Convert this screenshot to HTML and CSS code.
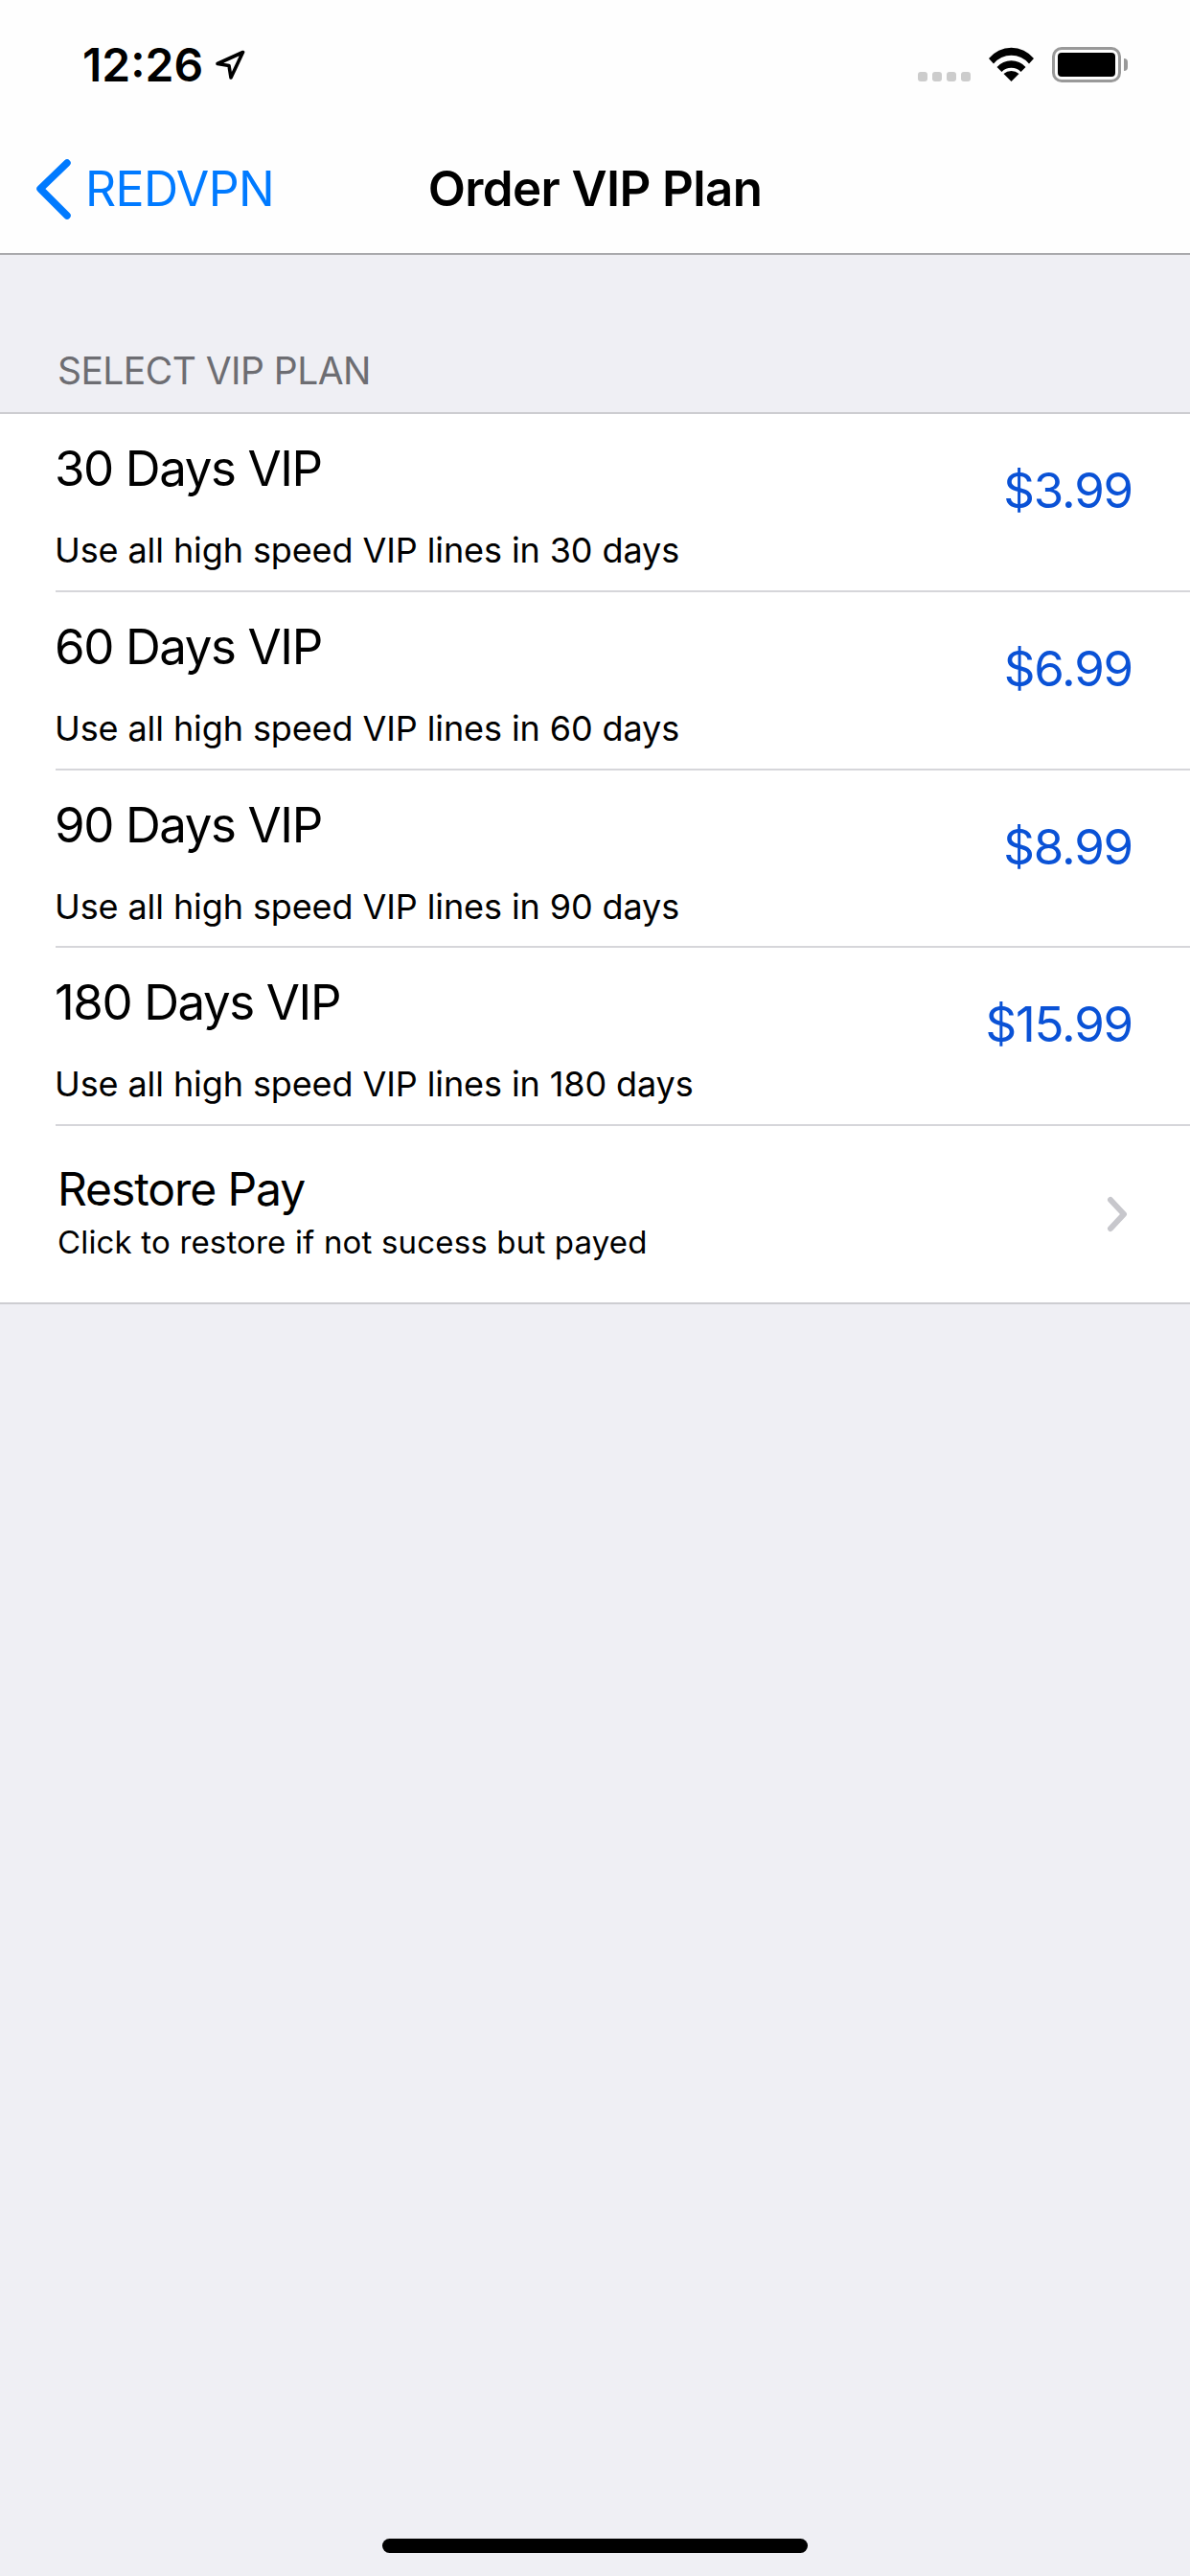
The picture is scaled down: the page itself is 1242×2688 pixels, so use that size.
FILE: index.html
```html
<!DOCTYPE html>
<html lang="en">
<head>
<meta charset="utf-8">
<title>Order VIP Plan</title>
<link rel="stylesheet" href="styles.css">
</head>
<body>
<div class="screen">
  <header class="topbar">
    <div class="status">
      <div class="status-left">
        <span class="time">12:26</span>
        <svg class="loc" viewBox="0 0 32 32" width="32" height="32"><path d="M29.5 2.5 L3 14.5 L15 16.5 L17 29 Z" fill="none" stroke="#000" stroke-width="3.6" stroke-linejoin="round"/></svg>
      </div>
      <div class="status-right">
        <div class="dots"><i></i><i></i><i></i><i></i></div>
        <svg class="wifi" viewBox="0 0 47 36" width="47" height="36"><path d="M0 12A30 30 0 0 1 47 12L42 17.500A24 24 0 0 0 5 17.500Z"/><path d="M8.500 21A20 20 0 0 1 38.500 21L33.500 26A14 14 0 0 0 13.500 26Z"/><path d="M15.500 28A12 12 0 0 1 31.500 28L23.500 36Z"/></svg>
        <div class="battery"><div class="battery-body"><div class="battery-fill"></div></div><div class="battery-cap"></div></div>
      </div>
    </div>
    <nav class="nav">
      <div class="back">
        <svg class="back-chevron" viewBox="0 0 38 64" width="38" height="64"><path d="M33 5 L5 32 L33 60" fill="none" stroke="#007aff" stroke-width="7.500" stroke-linecap="round" stroke-linejoin="round"/></svg>
        <span class="back-label">REDVPN</span>
      </div>
      <h1 class="nav-title">Order VIP Plan</h1>
      <div class="nav-spacer"></div>
    </nav>
  </header>

  <h2 class="section-title">SELECT VIP PLAN</h2>

  <section class="group">
    <div class="row">
      <div class="plan"><div class="plan-name">30 Days VIP</div><div class="plan-desc">Use all high speed VIP lines in 30 days</div></div>
      <div class="price">$3.99</div>
    </div>
    <div class="row">
      <div class="plan"><div class="plan-name">60 Days VIP</div><div class="plan-desc">Use all high speed VIP lines in 60 days</div></div>
      <div class="price">$6.99</div>
    </div>
    <div class="row">
      <div class="plan"><div class="plan-name">90 Days VIP</div><div class="plan-desc">Use all high speed VIP lines in 90 days</div></div>
      <div class="price">$8.99</div>
    </div>
    <div class="row">
      <div class="plan"><div class="plan-name">180 Days VIP</div><div class="plan-desc">Use all high speed VIP lines in 180 days</div></div>
      <div class="price">$15.99</div>
    </div>
    <div class="row row-restore">
      <div class="plan"><div class="restore-name">Restore Pay</div><div class="restore-desc">Click to restore if not sucess but payed</div></div>
      <svg class="disclosure" viewBox="0 0 22 38" width="22" height="38"><path d="M4 4 L18 19 L4 34" fill="none" stroke="#c7c7cc" stroke-width="6" stroke-linecap="round" stroke-linejoin="round"/></svg>
    </div>
  </section>

  <div class="home-indicator"></div>
</div>
</body>
</html>
```

FILE: styles.css
```css
* { box-sizing: border-box; }
html, body { margin: 0; padding: 0; }
body { background: #efeff4; font-family: Inter, "Liberation Sans", sans-serif; color: #000; }
.screen { position: relative; width: 1242px; height: 2688px; overflow: hidden; background: #efeff4; }

.topbar { background: #fefefe; border-bottom: 2px solid #a9a9ac; height: 266px; }

.status { height: 132px; display: flex; justify-content: space-between; padding: 39px 65px 0 86px; }
.status-left { display: flex; align-items: flex-start; gap: 12px; }
.time { font-size: 48px; line-height: 58px; font-weight: 600; }
.loc { margin-top: 13px; }
.status-right { display: flex; align-items: flex-start; padding-top: 10px; }
.dots { display: flex; gap: 5px; margin-top: 26px; margin-right: 19px; }
.dots i { width: 10px; height: 10px; border-radius: 3px; background: #cccccc; }
.wifi { margin-right: 19px; }
.battery { display: flex; align-items: center; gap: 3px; }
.battery-body { width: 72px; height: 37px; border: 3px solid #999999; border-radius: 10px; padding: 3px; }
.battery-fill { width: 100%; height: 100%; background: #000; border-radius: 4px; }
.battery-cap { width: 4px; height: 13px; background: #999999; border-radius: 0 4px 4px 0; }

.nav { height: 132px; display: grid; grid-template-columns: 1fr auto 1fr; align-items: start; }
.back { display: flex; align-items: flex-start; padding-left: 37px; }
.back-chevron { margin-top: 33px; }
.back-label { font-size: 50px; line-height: 60px; color: #007aff; margin-left: 14px; margin-top: 35px; letter-spacing: -0.6px; }
.nav-title { margin: 35px 0 0; font-size: 51px; line-height: 60px; font-weight: 600; letter-spacing: -0.6px; }

.section-title { margin: 0; height: 164px; padding: 97px 0 0 60px; font-size: 39px; line-height: 47px; font-weight: 400; letter-spacing: -0.55px; color: #6d6d72; }

.group { background: #fff; border-top: 2px solid #cdcdd1; border-bottom: 2px solid #cdcdd1; height: 931px; display: flex; flex-direction: column; }
.row { flex: 1 1 0; margin-left: 58px; padding-right: 60px; display: flex; justify-content: space-between; align-items: flex-start; border-bottom: 2px solid #d6d6da; }
.row-restore { border-bottom: 0; align-items: center; }
.plan { padding-top: 27px; margin-left: -1px; }
.plan-name { font-size: 51px; line-height: 60px; letter-spacing: -1.4px; }
.plan-desc { margin-top: 33px; font-size: 36px; line-height: 44px; letter-spacing: -0.1px; }
.price { padding-top: 50px; font-size: 51px; line-height: 60px; letter-spacing: -1.2px; color: #0a52d6; }
.row-restore .plan { padding: 0 0 6px 3px; }
.restore-name { font-size: 48px; line-height: 56px; letter-spacing: -1.1px; }
.restore-desc { margin-top: 7px; font-size: 33px; line-height: 40px; letter-spacing: 0.17px; }
.disclosure { margin-right: 5px; }

.home-indicator { position: absolute; left: 399px; top: 2649px; width: 444px; height: 15px; border-radius: 8px; background: #000; }
```
